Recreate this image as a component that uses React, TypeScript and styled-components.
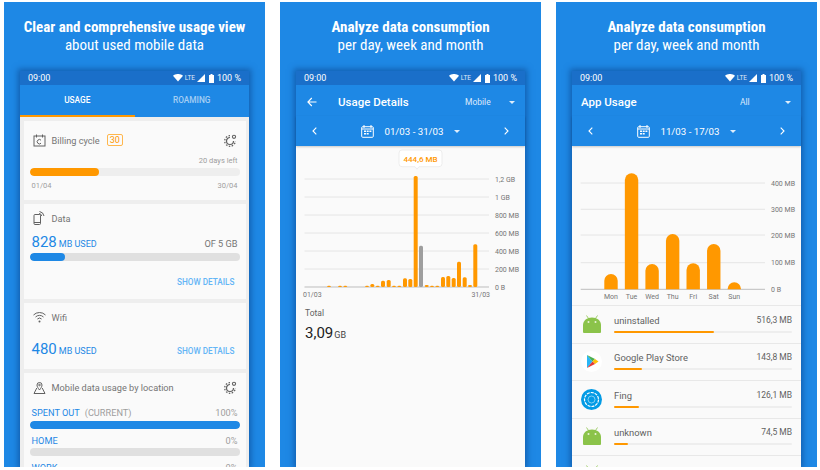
import React from 'react';
import styled, { createGlobalStyle } from 'styled-components';

const GlobalStyle = createGlobalStyle`
  html, body {
    margin: 0;
    padding: 0;
    background: #fff;
    font-family: Roboto, "Noto Sans", sans-serif;
  }
`;

const Page = styled.div`
  width: 820px;
  height: 470px;
  overflow: hidden;
  display: flex;
  gap: 15px;
  padding: 2px 0 0 4px;
  box-sizing: border-box;
`;

const Panel = styled.section`
  width: 261px;
  height: 465px;
  flex: none;
  background: #1e88e5;
  display: flex;
  flex-direction: column;
  align-items: center;
  overflow: hidden;
`;

const Heading = styled.h2`
  margin: 0;
  height: 69px;
  box-sizing: border-box;
  padding-top: 16px;
  color: #fff;
  text-align: center;
  font-size: 15px;
  line-height: 18px;
  font-weight: 400;
  font-stretch: 75%;
  white-space: nowrap;

  strong {
    display: block;
    font-weight: 700;
  }
`;

const Phone = styled.div`
  width: 229px;
  flex: 1;
  min-height: 0;
  display: flex;
  flex-direction: column;
  background: #fafafa;
  box-shadow: 0 0 6px 2px rgba(10, 60, 130, 0.55);
`;

const StatusBar = styled.div`
  height: 14px;
  flex: none;
  background: #1a6fc9;
  color: #fff;
  font-size: 9px;
  display: flex;
  align-items: center;
  justify-content: space-between;
  padding: 0 8px;
`;

const StatusIcons = styled.div`
  display: flex;
  align-items: center;
  gap: 2px;

  small {
    font-size: 6.5px;
    opacity: 0.85;
  }
`;

const Tabs = styled.div`
  height: 32px;
  flex: none;
  display: flex;
  background: #1e88e5;
`;

const Tab = styled.div<{ $active?: boolean }>`
  flex: 1;
  display: flex;
  align-items: center;
  justify-content: center;
  font-size: 8.3px;
  font-weight: 500;
  color: ${p => (p.$active ? '#fff' : 'rgba(255,255,255,0.6)')};
  border-bottom: 2px solid ${p => (p.$active ? '#ff9800' : 'transparent')};
`;

const CardList = styled.div`
  flex: 1;
  background: #eeeeee;
  padding: 4px 3.5px 0;
  display: flex;
  flex-direction: column;
  gap: 4px;
  overflow: hidden;
`;

const Card = styled.div<{ $h?: number; $top?: number }>`
  background: #fafafa;
  flex: none;
  height: ${p => (p.$h ? `${p.$h}px` : 'auto')};
  padding: ${p => p.$top || 0}px 6px 0;
  box-sizing: border-box;
`;

const CardHead = styled.div`
  display: flex;
  align-items: center;
  gap: 6px;
  height: 28px;
  padding: 0 3px;
  font-size: 9.2px;
  color: #757575;
`;

const Spacer = styled.div`
  flex: 1;
`;

const CycleBadge = styled.span`
  border: 1px solid #ffb74d;
  border-radius: 2px;
  color: #ff9800;
  font-size: 9px;
  line-height: 10px;
  padding: 0 2px;
  margin-left: 1px;
`;

const Track = styled.div<{ $bg?: string }>`
  height: 8px;
  border-radius: 4px;
  background: ${p => p.$bg || '#e0e0e0'};
  overflow: hidden;
`;

const Fill = styled.div<{ $color: string }>`
  height: 100%;
  border-radius: 4px;
  background: ${p => p.$color};
`;

const DateRow = styled.div`
  display: flex;
  justify-content: space-between;
  align-items: baseline;
  padding: 0 2px;
  margin-top: 5px;
  font-size: 7.5px;
  color: #9e9e9e;
`;

const RightNote = styled.div`
  text-align: right;
  margin-top: 1.5px;
  padding: 0 2px 3.5px;
  font-size: 7.5px;
  color: #9e9e9e;
`;

const Amount = styled.div`
  color: #1e88e5;
  font-size: 9px;
  display: flex;
  align-items: baseline;
  gap: 2px;

  b {
    font-size: 15px;
    font-weight: 400;
  }
`;

const UsageRow = styled.div<{ $top: number }>`
  display: flex;
  justify-content: space-between;
  align-items: baseline;
  margin-top: ${p => p.$top}px;
  padding: 0 2px 2px;
  font-size: 9.2px;
  color: #757575;
`;

const DetailLink = styled.div<{ $top?: number; $right: number }>`
  text-align: right;
  padding-right: ${p => p.$right}px;
  margin-top: ${p => p.$top || 0}px;
  color: #64b5f6;
  font-size: 8.2px;
  font-weight: 500;
`;

const LocationRow = styled.div`
  display: flex;
  justify-content: space-between;
  align-items: baseline;
  padding: 0 2px 2.5px;
  margin-top: 6px;
  font-size: 9.2px;
  color: #9e9e9e;

  em {
    font-style: normal;
    color: #1e88e5;
    margin-right: 5px;
  }
`;

const AppBar = styled.div`
  height: 31px;
  flex: none;
  box-sizing: border-box;
  padding-top: 3px;
  background: #1e88e5;
  color: #fff;
  display: flex;
  align-items: center;
  font-size: 11.5px;
  font-weight: 500;
`;

const BackSlot = styled.div`
  width: 42px;
  padding-left: 11px;
  box-sizing: border-box;
  display: flex;
`;

const TitleText = styled.div<{ $pad?: number }>`
  flex: 1;
  padding-left: ${p => p.$pad || 0}px;
`;

const Filter = styled.div<{ $w: number }>`
  width: ${p => p.$w}px;
  flex: none;
  display: flex;
  align-items: center;
  justify-content: space-between;
  box-sizing: border-box;
  padding-right: 10px;
  font-size: 8.5px;
  font-weight: 400;
  color: rgba(255, 255, 255, 0.85);
`;

const Caret = styled.span`
  width: 0;
  height: 0;
  border-left: 3px solid transparent;
  border-right: 3px solid transparent;
  border-top: 3px solid rgba(255, 255, 255, 0.85);
`;

const DateBar = styled.div`
  height: 30px;
  flex: none;
  background: #1e88e5;
  color: #fff;
  display: flex;
  align-items: center;
  justify-content: space-between;
  padding: 0 16px;
  font-size: 9.7px;
  box-shadow: 0 1px 2px rgba(0, 0, 0, 0.2);
  position: relative;
`;

const DateCenter = styled.div`
  display: flex;
  align-items: center;
  gap: 10px;
`;

const ChartArea = styled.div`
  flex: none;
  line-height: 0;
`;

const TotalBlock = styled.div`
  padding: 5px 9px;
  color: #616161;
  font-size: 8.5px;
`;

const TotalValue = styled.div`
  margin-top: 6px;
  font-size: 9px;
  display: flex;
  align-items: baseline;
  gap: 1px;
  color: #424242;

  b {
    font-size: 15px;
    font-weight: 400;
    color: #212121;
  }
`;

const AppRow = styled.div`
  height: 37.5px;
  flex: none;
  box-sizing: border-box;
  border-top: 1px solid #e8e8e8;
  display: flex;
  align-items: center;
  padding: 0 9px;
`;

const AppIconSlot = styled.div`
  width: 21px;
  margin-right: 12px;
  flex: none;
  display: flex;
  justify-content: center;
`;

const AppBody = styled.div`
  flex: 1;
  margin-top: -1px;
`;

const AppLine = styled.div`
  display: flex;
  justify-content: space-between;
  font-size: 9.4px;
  line-height: 11px;
  color: #616161;

  small {
    font-size: 8.5px;
  }
`;

const AppTrack = styled.div`
  height: 2px;
  margin-top: 5px;
  background: #eeeeee;
  border-radius: 1px;
`;

const AppFill = styled.div`
  height: 100%;
  background: #ff9800;
  border-radius: 1px;
`;

const StatusBarContent = () => (
  <StatusBar>
    <span>09:00</span>
    <StatusIcons>
      <svg width="10" height="7.5" viewBox="0 0 10 7.5"><path d="M0 1.7C2.8-.6 7.2-.6 10 1.7L5 7.5z" fill="#fff" /></svg>
      <small>LTE</small>
      <svg width="8" height="8" viewBox="0 0 8 8"><path d="M8 0v8H0z" fill="#fff" /></svg>
      <svg width="5" height="9" viewBox="0 0 5 9" style={{ marginLeft: 2, marginRight: 1 }}><path d="M1.5 0h2v1H5v8H0V1h1.5z" fill="#fff" /></svg>
      <span>100 %</span>
    </StatusIcons>
  </StatusBar>
);

const GearDots = () => (
  <svg width="13" height="13" viewBox="0 0 13 13" fill="none" stroke="#616161">
    <path d="M6 3.5A3.5 3.5 0 1 0 9.5 7" strokeWidth="1.2" />
    <path d="M6 1.7A5.3 5.3 0 1 0 11.3 7" strokeWidth="1.3" strokeDasharray="1.5 1.5" />
    <circle cx="10" cy="2.8" r="1.6" strokeWidth="1.1" />
  </svg>
);

const CycleIcon = () => (
  <svg width="13" height="13" viewBox="0 0 13 13" fill="none" stroke="#616161" strokeWidth="1">
    <rect x="1" y="2" width="11" height="10" />
    <path d="M3.5.5v3M9.5.5v3M8 6.2a2.2 2.2 0 1 0 0 3" />
  </svg>
);

const DataIcon = () => (
  <svg width="13" height="14" viewBox="0 0 13 14" fill="none" stroke="#616161" strokeWidth="1">
    <rect x="1" y="3.5" width="6.5" height="10" rx="1" />
    <path d="M1 11.5h6.5M6 2.5A3 3 0 0 1 8.7 5M6.5.5A5.5 5.5 0 0 1 11 5" />
  </svg>
);

const WifiIcon = () => (
  <svg width="13" height="11" viewBox="0 0 13 11" fill="none" stroke="#616161" strokeWidth="1">
    <path d="M.5 3a8.5 8.5 0 0 1 12 0M2.5 5a5.7 5.7 0 0 1 8 0M4.4 7a3 3 0 0 1 4.2 0" />
    <circle cx="6.5" cy="9.5" r="1" fill="#616161" stroke="none" />
  </svg>
);

const PinIcon = () => (
  <svg width="13" height="13" viewBox="0 0 13 13" fill="none" stroke="#616161" strokeWidth="1">
    <path d="M6.5 9C5 7 4 5.6 4 4a2.5 2.5 0 0 1 5 0c0 1.6-1 3-2.5 5z" />
    <circle cx="6.5" cy="4" r=".8" />
    <path d="M3.8 7 1 12.5h11L9.2 7" />
  </svg>
);

const BackIcon = () => (
  <svg width="10" height="10" viewBox="0 0 10 10" fill="none" stroke="#fff" strokeWidth="1.1">
    <path d="M9.5 5H1M4.8 1 .9 5l3.9 4" />
  </svg>
);

const Chevron = ({ right }: { right?: boolean }) => (
  <svg width="5" height="8" viewBox="0 0 5 8" fill="none" stroke="#fff" strokeWidth="1.1">
    <path d={right ? 'M.7.7 4 4 .7 7.3' : 'M4.3.7 1 4l3.3 3.3'} />
  </svg>
);

const CalendarIcon = () => (
  <svg width="13" height="13" viewBox="0 0 13 13" fill="none" stroke="#fff" strokeWidth="1">
    <rect x=".7" y="1.7" width="11.6" height="10.6" rx="1" />
    <path d="M3 0v3M10 0v3M.7 4h11.6" />
    <path d="M3 5.5h2V7H3zM5.7 5.5h2V7h-2zM8.4 5.5h2V7h-2zM3 8h2v1.5H3zM5.7 8h2v1.5h-2z" fill="#fff" stroke="none" />
  </svg>
);

const AndroidIcon = () => (
  <svg width="18" height="19" viewBox="0 0 18 19">
    <path d="M3.5.5l2 3M14.5.5l-2 3" stroke="#8bc34a" strokeWidth=".8" />
    <path d="M1 18a1 1 0 0 1-1-1V10C0 5.5 4 2.5 9 2.5s9 3 9 7.5v7a1 1 0 0 1-1 1z" fill="#8bc34a" />
    <circle cx="5.5" cy="7" r="1" fill="#e8f5d8" />
    <circle cx="12.5" cy="7" r="1" fill="#e8f5d8" />
  </svg>
);

const PlayIcon = () => (
  <svg width="21" height="21" viewBox="0 0 21 21">
    <circle cx="10.5" cy="10.5" r="10.5" fill="#fff" />
    <path d="M6 4V17l5.5-6.5z" fill="#29b6f6" />
    <path d="M6 4l5.5 6.5L14 8z" fill="#4caf50" />
    <path d="M14 8l3.5 2.5L14 13l-2.5-2.5z" fill="#ffc107" />
    <path d="M6 17l5.5-6.5L14 13z" fill="#e53935" />
  </svg>
);

const FingIcon = () => (
  <svg width="21" height="21" viewBox="0 0 21 21">
    <circle cx="10.5" cy="10.5" r="10.5" fill="#039be5" />
    <circle cx="10.5" cy="10.5" r="7" fill="none" stroke="#fff" strokeWidth="1.2" strokeDasharray="3 1" />
    <circle cx="10.5" cy="10.5" r="3.5" fill="none" stroke="rgba(255,255,255,0.5)" strokeWidth="1" />
  </svg>
);

// [center x, top y] of each small bar, in chart pixels
const detailBars = [
  [33, 139.7], [44, 139.7], [49.3, 139.7], [71, 139.7], [76.3, 138], [81.7, 139.7],
  [87, 134.7], [92.7, 134], [98, 139.7], [103.3, 139.7], [109, 132.3], [114.3, 133],
  [130.7, 139], [136, 139.7], [141.3, 139.7], [147, 131], [152.3, 130], [157.7, 132],
  [163, 115.7], [168.7, 131.3], [174, 139], [179.3, 98.3],
];

const DetailChart = () => {
  const labels = ['1,2 GB', '1 GB', '800 MB', '600 MB', '400 MB', '200 MB', '0 B'];
  return (
    <svg width="229" height="157" viewBox="0 0 229 157" fontFamily="Roboto, sans-serif">
      {labels.map((l, i) => {
        const y = 33 + i * 18;
        return (
          <g key={l}>
            {i < 6 && <line x1="8.5" x2="193" y1={y} y2={y} stroke="#e0e0e0" strokeWidth=".8" />}
            <text x="199" y={y + 2.5} fontSize="7" fill="#757575">{l}</text>
          </g>
        );
      })}
      <line x1="8.5" x2="193" y1="141" y2="141" stroke="#bdbdbd" strokeWidth="1" />
      {detailBars.map(([x, top]) => (
        <rect key={x} x={x - 2} y={top} width="4" height={141 - top} rx="1.5" fill="#ff9800" />
      ))}
      <rect x="117.7" y="30" width="4" height="111" rx="1.5" fill="#ff9800" />
      <rect x="123" y="99.7" width="4" height="41.3" rx="1.5" fill="#9e9e9e" />
      <path d="M103 7a3 3 0 0 1 3-3h37a3 3 0 0 1 3 3v10.7a3 3 0 0 1-3 3h-20l-2 2.5-2-2.5h-13a3 3 0 0 1-3-3z" fill="#fff" stroke="#e8e8e8" strokeWidth=".8" />
      <text x="124.5" y="15.5" textAnchor="middle" fontSize="8" fontWeight="500" fill="#ff9800">444,6 MB</text>
      <text x="7" y="150.5" fontSize="7" fill="#757575">01/03</text>
      <text x="194" y="150.5" textAnchor="end" fontSize="7" fill="#757575">31/03</text>
    </svg>
  );
};

const weekBars = [
  ['Mon', 128], ['Tue', 27.3], ['Wed', 118], ['Thu', 88], ['Fri', 117.3], ['Sat', 98], ['Sun', 136.3],
] as const;

const WeekChart = () => {
  const gridY = [37, 63.3, 89, 116.7];
  const gridLabels = ['400 MB', '300 MB', '200 MB', '100 MB'];
  return (
    <svg width="229" height="159" viewBox="0 0 229 159" fontFamily="Roboto, sans-serif">
      {gridY.map((y, i) => (
        <g key={y}>
          <line x1="8.7" x2="193" y1={y} y2={y} stroke="#e0e0e0" strokeWidth=".8" />
          <text x="199" y={y + 2.5} fontSize="7" fill="#757575">{gridLabels[i]}</text>
        </g>
      ))}
      <line x1="8.7" x2="193" y1="143.3" y2="143.3" stroke="#bdbdbd" strokeWidth="1" />
      <text x="199" y="145.8" fontSize="7" fill="#757575">0 B</text>
      {weekBars.map(([d, t], i) => {
        const cx = 39 + i * 20.55;
        return (
          <g key={d}>
            <path d={`M${cx - 6.7} 143.3V${t + 6.7}a6.7 6.7 0 0 1 13.4 0V143.3z`} fill="#ff9800" />
            <text x={cx} y="152.5" textAnchor="middle" fontSize="7" fill="#757575">{d}</text>
          </g>
        );
      })}
    </svg>
  );
};

const apps = [
  { name: 'uninstalled', size: '516,3 MB', pct: 56, icon: <AndroidIcon /> },
  { name: 'Google Play Store', size: '143,8 MB', pct: 16, icon: <PlayIcon /> },
  { name: 'Fing', size: '126,1 MB', pct: 14, icon: <FingIcon /> },
  { name: 'unknown', size: '74,5 MB', pct: 8, icon: <AndroidIcon /> },
  { name: 'samsung android uid 10095', size: '', pct: 0, icon: <AndroidIcon /> },
];

export default function App() {
  return (
    <Page>
      <GlobalStyle />
      <Panel>
        <Heading>
          <strong>Clear and comprehensive usage view</strong>
          about used mobile data
        </Heading>
        <Phone>
          <StatusBarContent />
          <Tabs>
            <Tab $active>USAGE</Tab>
            <Tab>ROAMING</Tab>
          </Tabs>
          <CardList>
            <Card $h={79} $top={5}>
              <CardHead>
                <CycleIcon />
                Billing cycle <CycleBadge>30</CycleBadge>
                <Spacer />
                <GearDots />
              </CardHead>
              <RightNote>20 days left</RightNote>
              <Track $bg="#eeeeee"><Fill $color="#ff9800" style={{ width: '33%' }} /></Track>
              <DateRow><span>01/04</span><span>30/04</span></DateRow>
            </Card>
            <Card $h={95}>
              <CardHead>
                <DataIcon />
                Data
              </CardHead>
              <UsageRow $top={1}>
                <Amount><b>828</b> MB USED</Amount>
                <span>OF 5 GB</span>
              </UsageRow>
              <Track><Fill $color="#1e88e5" style={{ width: '17%' }} /></Track>
              <DetailLink $top={16} $right={5}>SHOW DETAILS</DetailLink>
            </Card>
            <Card $h={66}>
              <CardHead>
                <WifiIcon />
                Wifi
              </CardHead>
              <UsageRow $top={9}>
                <Amount><b>480</b> MB USED</Amount>
                <DetailLink $right={3}>SHOW DETAILS</DetailLink>
              </UsageRow>
            </Card>
            <Card>
              <CardHead>
                <PinIcon />
                Mobile data usage by location
                <Spacer />
                <GearDots />
              </CardHead>
              <LocationRow><span><em>SPENT OUT</em>(CURRENT)</span><span>100%</span></LocationRow>
              <Track><Fill $color="#1e88e5" style={{ width: '100%' }} /></Track>
              <LocationRow><span><em>HOME</em></span><span>0%</span></LocationRow>
              <Track />
              <LocationRow><span><em>WORK</em></span><span>0%</span></LocationRow>
            </Card>
          </CardList>
        </Phone>
      </Panel>

      <Panel>
        <Heading>
          <strong>Analyze data consumption</strong>
          per day, week and month
        </Heading>
        <Phone>
          <StatusBarContent />
          <AppBar>
            <BackSlot><BackIcon /></BackSlot>
            <TitleText>Usage Details</TitleText>
            <Filter $w={60}>Mobile <Caret /></Filter>
          </AppBar>
          <DateBar>
            <Chevron />
            <DateCenter>
              <CalendarIcon />
              01/03 - 31/03
              <Caret />
            </DateCenter>
            <Chevron right />
          </DateBar>
          <ChartArea><DetailChart /></ChartArea>
          <TotalBlock>
            Total
            <TotalValue><b>3,09</b> GB</TotalValue>
          </TotalBlock>
        </Phone>
      </Panel>

      <Panel>
        <Heading>
          <strong>Analyze data consumption</strong>
          per day, week and month
        </Heading>
        <Phone>
          <StatusBarContent />
          <AppBar>
            <TitleText $pad={9}>App Usage</TitleText>
            <Filter $w={61}>All <Caret /></Filter>
          </AppBar>
          <DateBar>
            <Chevron />
            <DateCenter>
              <CalendarIcon />
              11/03 - 17/03
              <Caret />
            </DateCenter>
            <Chevron right />
          </DateBar>
          <ChartArea><WeekChart /></ChartArea>
          {apps.map(a => (
            <AppRow key={a.name}>
              <AppIconSlot>{a.icon}</AppIconSlot>
              <AppBody>
                <AppLine><span>{a.name}</span><small>{a.size}</small></AppLine>
                <AppTrack><AppFill style={{ width: `${a.pct}%` }} /></AppTrack>
              </AppBody>
            </AppRow>
          ))}
        </Phone>
      </Panel>
    </Page>
  );
}
